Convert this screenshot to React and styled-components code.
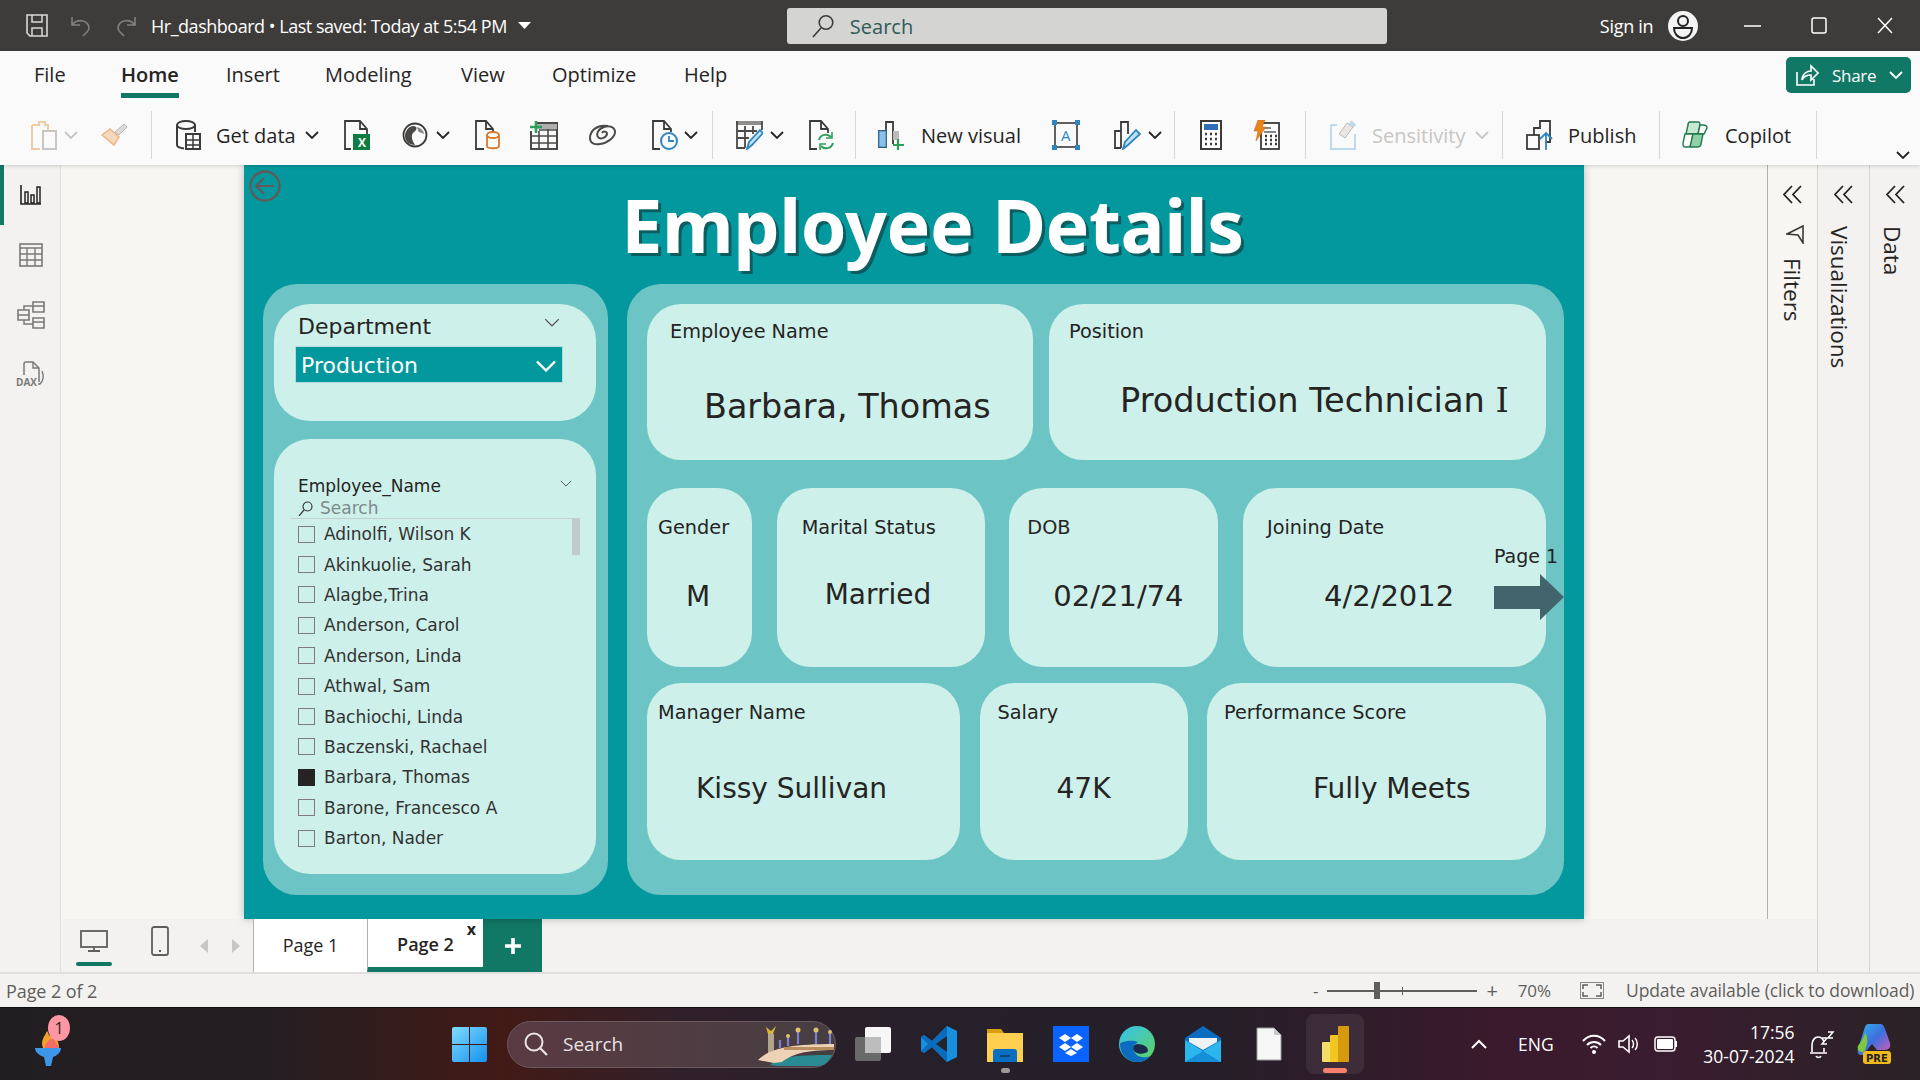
import React from "react";
import styled, { createGlobalStyle } from "styled-components";

const Global = createGlobalStyle`
  html, body { margin: 0; padding: 0; width: 1920px; height: 1080px; overflow: hidden; }
  body { font-family: "Open Sans", "Noto Sans", sans-serif; background: #f3f2f1; }
  * { box-sizing: border-box; }
  svg { display: block; }
`;

const Page = styled.div`width:1920px;height:1080px;display:flex;flex-direction:column;`;

/* title bar */
const TitleBar = styled.header`height:51px;background:#3e3c3a;color:#fff;display:flex;align-items:center;position:relative;flex:none;`;
const TitleGroup = styled.div`display:flex;align-items:center;margin-left:${p=>p.$ml||0}px;`;
const FileName = styled.span`font-size:18px;letter-spacing:-.48px;white-space:nowrap;`;
const SearchBox = styled.div`width:600px;height:36px;background:#d4d4d2;border-radius:3px;display:flex;align-items:center;padding-left:25px;gap:16px;color:#2f5b57;font-size:20px;margin-left:${p=>p.$ml}px;padding-top:1px;`;
const SignIn = styled.span`font-size:18px;letter-spacing:-.3px;`;

/* ribbon */
const Ribbon = styled.section`height:114px;background:#fafafa;flex:none;position:relative;z-index:2;box-shadow:0 1px 4px rgba(0,0,0,.16);`;
const TabRow = styled.nav`height:54px;display:flex;align-items:flex-start;position:relative;`;
const RibbonTab = styled.div`
  margin-left:${p=>p.$ml}px;width:${p=>p.$w}px;height:47px;padding-top:10px;font-size:20px;line-height:27px;color:#252423;white-space:nowrap;
  font-weight:${p=>p.$on?600:400};
  border-bottom:${p=>p.$on?"5px solid #117865":"none"};
`;
const ShareBtn = styled.button`
  position:absolute;left:1786px;top:6px;width:125px;height:36px;background:#117865;border:0;border-radius:5px;color:#fff;
  font:400 17px "Open Sans",sans-serif;display:flex;align-items:center;padding:0 0 0 9px;gap:13px;letter-spacing:-.3px;
`;
const ToolRow = styled.div`height:60px;display:flex;align-items:center;`;
const Slot = styled.div`margin-left:${p=>p.$ml}px;width:${p=>p.$w}px;flex:none;display:flex;align-items:center;justify-content:center;margin-top:${p=>p.$mt||0}px;`;
const ToolText = styled.span`
  margin-left:${p=>p.$ml}px;width:${p=>p.$w}px;flex:none;font-size:20px;white-space:nowrap;color:${p=>p.$off?"#c8c6c4":"#252423"};
`;
const VDiv = styled.div`margin-left:${p=>p.$ml}px;width:1px;height:48px;background:#d8d6d4;flex:none;`;

/* work area */
const Work = styled.main`flex:1;display:flex;min-height:0;`;
const Rail = styled.aside`width:61px;background:#f3f2f1;border-right:1px solid #e1dfdd;flex:none;display:flex;flex-direction:column;position:relative;`;
const RailItem = styled.div`height:60px;display:flex;align-items:center;justify-content:center;border-left:4px solid ${p=>p.$on?"#117865":"transparent"};padding-right:3px;`;
const Center = styled.div`width:1756px;display:flex;flex-direction:column;flex:none;`;
const CanvasRow = styled.div`height:754px;display:flex;flex:none;background:#f7f6f2;`;
const CanvasWell = styled.div`flex:1;padding-left:183px;`;
const FilterPane = styled.div`width:50px;border-left:1px solid #b3b1af;flex:none;`;
const SidePane = styled.div`width:${p=>p.$w}px;flex:none;background:${p=>p.$bg};border-left:1px solid #d8d6d4;`;
const PaneInner = styled.div`display:flex;flex-direction:column;align-items:center;padding-top:20px;`;
const VText = styled.span`writing-mode:vertical-rl;font-size:22.5px;color:#252423;margin-top:${p=>p.$mt}px;margin-right:${p=>p.$mr||0}px;font-weight:400;line-height:24px;`;

const Canvas = styled.div`width:1340px;height:754px;background:#03989e;position:relative;box-shadow:0 0 8px rgba(0,0,0,.25);`;
const BackBtn = styled.div`position:absolute;left:5px;top:5px;`;
const Title = styled.h1`
  margin:0;height:119px;padding:12px 0 0 37px;text-align:center;color:#fff;font:700 73.5px/96px "Noto Sans",sans-serif;
  text-shadow:3px 3px 0 #0b5d60;letter-spacing:-.4px;
`;
const Panels = styled.div`display:flex;gap:19px;padding-left:19px;`;
const OuterLeft = styled.div`width:345px;height:611px;background:#6cc4c4;border-radius:34px;padding:20px 0 0 11px;`;
const OuterRight = styled.div`width:937px;height:611px;background:#6cc4c4;border-radius:34px;padding:20px 0 0 20px;position:relative;`;

const SoftCard = styled.div`background:#cdf0ea;width:${p=>p.$w}px;height:${p=>p.$h}px;border-radius:36px;padding-top:${p=>p.$pt||0}px;margin-bottom:${p=>p.$mb||0}px;`;
const DeptHead = styled.div`display:flex;justify-content:space-between;align-items:flex-start;padding:0 36px 0 24px;height:30px;margin-bottom:4px;`;
const SlicerTitle = styled.div`font:400 ${p=>p.$fs}px/${p=>p.$lh}px "DejaVu Sans",sans-serif;color:#252423;`;
const HeadChevron = styled.div`padding-top:${p=>p.$pt}px;`;
const Dropdown = styled.div`margin-left:21px;width:268px;height:37px;background:#03989e;border:1px solid #b2dcdc;color:#fff;font:400 22px/30px "DejaVu Sans",sans-serif;padding:3px 5px 0 5px;display:flex;align-items:center;justify-content:space-between;`;
const EmpHead = styled.div`display:flex;justify-content:space-between;align-items:flex-start;padding:36px 24px 0 24px;height:60px;`;
const SearchLine = styled.div`display:flex;align-items:center;gap:7px;padding-left:24px;height:19px;color:#7d8b89;font:400 17px/19px "DejaVu Sans",sans-serif;`;
const ListArea = styled.div`margin:0 16px;border-top:1px solid #c3cfcc;position:relative;padding:0 0 0 8px;height:350px;`;
const ScrollThumb = styled.div`position:absolute;right:0;top:0;width:8px;height:36px;background:#c0cccb;`;
const ListRow = styled.div`height:30.4px;display:flex;align-items:center;gap:9px;font:400 17px/22px "DejaVu Sans",sans-serif;color:#333;`;
const Check = styled.span`width:17px;height:17px;flex:none;border:1px solid ${p=>p.$on?"#252423":"#7e7b7b"};background:${p=>p.$on?"#252423":"transparent"};`;

const CardRow = styled.div`display:grid;grid-template-columns:${p=>p.$cols};column-gap:${p=>p.$gap}px;height:${p=>p.$h}px;margin-bottom:${p=>p.$mb||0}px;`;
const InfoCard = styled.article`background:#cdf0ea;border-radius:34px;padding-top:${p=>p.$pt}px;padding-left:${p=>p.$pl}px;`;
const InfoLabel = styled.div`font:400 19.3px/24px "DejaVu Sans",sans-serif;color:#252423;white-space:nowrap;`;
const InfoValue = styled.div`
  font:400 ${p=>p.$fs||28}px/${p=>p.$lh||40}px "DejaVu Sans",sans-serif;color:#252423;white-space:nowrap;
  margin-top:${p=>p.$mt}px;margin-left:${p=>p.$ml}px;
`;
const SerifI = styled.span`font-family:"DejaVu Serif",serif;`;
const NextLink = styled.div`position:absolute;left:867px;top:260px;color:#252423;font:400 19px/24px "DejaVu Sans",sans-serif;`;
const NextArrow = styled.div`margin-top:6px;`;

/* tabs bar */
const TabBar = styled.div`height:54px;background:#f3f2f1;display:flex;align-items:stretch;flex:none;`;
const DeviceBtn = styled.div`margin-left:${p=>p.$ml}px;width:${p=>p.$w}px;display:flex;flex-direction:column;align-items:center;padding-top:${p=>p.$pt}px;position:relative;flex:none;`;
const DeviceMark = styled.span`position:absolute;bottom:7px;left:0;right:0;height:4px;border-radius:2px;background:#117865;`;
const PageTab = styled.div`
  width:${p=>p.$w}px;flex:none;background:#fff;border-left:1px solid #b3b1af;font-size:18px;color:#252423;display:flex;align-items:center;justify-content:center;position:relative;
  font-weight:${p=>p.$on?600:400};padding-bottom:2px;
  border-bottom:${p=>p.$on?"6px solid #117865":"none"};padding-top:${p=>p.$on?4:0}px;
`;
const TabClose = styled.span`position:absolute;right:7px;top:1px;font-size:16px;font-weight:700;line-height:18px;`;
const AddTab = styled.div`width:59px;flex:none;background:#117865;color:#fff;display:flex;align-items:center;justify-content:center;`;

/* status */
const StatusBar = styled.footer`height:35px;background:#f3f2f1;border-top:2px solid #e1dfdd;display:flex;align-items:center;color:#605e5c;font-size:18px;flex:none;padding-left:6px;position:relative;letter-spacing:-.1px;`;
const StatusText = styled.span`white-space:nowrap;`;
const ZoomWrap = styled.div`position:absolute;left:1313px;top:0;height:33px;display:flex;align-items:center;font-size:17px;`;
const ZoomTrack = styled.div`width:150px;height:2px;background:#605e5c;position:relative;margin:0 9px;`;
const ZoomThumb = styled.span`position:absolute;left:47px;top:-8px;width:6px;height:17px;background:#605e5c;`;
const ZoomTick = styled.span`position:absolute;left:75px;top:-3px;width:1px;height:8px;background:#605e5c;`;
const ZoomPlus = styled.span`font-size:20px;`;
const ZoomPct = styled.span`margin-left:20px;`;
const ZoomFit = styled.span`margin-left:29px;`;
const StatusUpdate = styled.span`position:absolute;left:1626px;top:4px;font-size:17.5px;letter-spacing:-.12px;white-space:nowrap;`;

/* taskbar */
const Taskbar = styled.div`
  height:73px;flex:none;border-top:1px solid #111;color:#fff;display:flex;align-items:center;position:relative;
  background:linear-gradient(90deg,#211e22 0%,#241e22 14%,#421a16 26%,#30202a 36%,#25202a 50%,#241f28 62%,#3a1a2c 78%,#3a1c30 86%,#2a2226 100%);
`;
const TaskIcon = styled.div`margin-left:${p=>p.$ml}px;flex:none;position:relative;display:flex;align-items:center;justify-content:center;`;
const Badge = styled.span`position:absolute;left:13px;top:-7px;width:22px;height:26px;border-radius:50%;background:#ff97a3;color:#222;font-size:16px;line-height:26px;text-align:center;`;
const TaskSearch = styled.div`margin-left:20px;width:329px;height:47px;border-radius:24px;background:linear-gradient(90deg,#5a3a42,#463e42);border:1px solid #6a5a5e;display:flex;align-items:center;padding-left:16px;gap:15px;font-size:19px;color:#e8e4e4;position:relative;flex:none;`;
const BridgeArt = styled.div`position:absolute;right:-1px;top:2px;`;
const ActiveApp = styled.div`margin-left:24px;width:58px;height:60px;border-radius:8px;background:rgba(255,255,255,.07);display:flex;flex-direction:column;align-items:center;padding-top:12px;position:relative;flex:none;`;
const ActivePip = styled.span`position:absolute;bottom:1px;left:17px;width:24px;height:5px;border-radius:3px;background:#f9806c;`;
const OpenDot = styled.span`position:absolute;bottom:-11px;left:50%;margin-left:-4px;width:9px;height:5px;border-radius:3px;background:#9a9a9a;`;
const TrayText = styled.span`margin-left:${p=>p.$ml}px;font-size:17.5px;flex:none;`;
const Clock = styled.div`margin-left:${p=>p.$ml}px;width:100px;flex:none;text-align:right;font-size:17.5px;line-height:24px;`;
const FilterGlyph = styled.div`margin-top:21px;margin-left:4px;`;

/* helpers */
const S = ({w,h,vb,children})=> <svg width={w} height={h} viewBox={vb||`0 0 ${w} ${h}`} fill="none">{children}</svg>;
const Chev = ({c="#252423",w=14,h=8,sw=1.8})=> <S w={w} h={h} vb="0 0 14 8"><path d="M1 1l6 6 6-6" stroke={c} strokeWidth={sw}/></S>;

const IconClipboard=()=> <S w={26} h={30}><path d="M1 5h7V2h6v3h3v6M1 5v24h8" stroke="#eecba6" strokeWidth="2"/><rect x="12" y="11" width="13" height="18" stroke="#c8c6c4" strokeWidth="2"/></S>;
const IconBrush=()=> <S w={28} h={24}><path d="M2 12l12 10 5-8-9-8z" fill="#f6d8ba" stroke="#e8b78c" strokeWidth="1.5"/><path d="M15 9l9-8 3 3-8 8z" fill="#dcdad8" stroke="#b8b6b4"/></S>;
const IconCyl=()=> <S w={26} h={30}><ellipse cx="11" cy="5" rx="9" ry="4" stroke="#3b3a39" strokeWidth="2"/><path d="M2 5v20c0 2 3 3 7 3.5M20 5v7" stroke="#3b3a39" strokeWidth="2"/><rect x="11" y="14" width="14" height="15" fill="#fafafa" stroke="#3b3a39" strokeWidth="2"/><path d="M11 20h14M11 25h14M18 14v15" stroke="#3b3a39" strokeWidth="1.5"/></S>;
const IconExcel=()=> <S w={27} h={30}><path d="M8 29H2V1h15l7 8v5M17 1v8h7" stroke="#3b3a39" strokeWidth="1.8"/><rect x="10" y="14" width="17" height="16" fill="#107c41"/><text x="15" y="27" fill="#fff" fontSize="12" fontWeight="700" fontFamily="Open Sans">X</text></S>;
const IconLake=()=> <S w={26} h={26}><circle cx="13" cy="13" r="11.5" stroke="#3b3a39" strokeWidth="1.8"/><path d="M3 14c0-6 5-10 8-10 5 0 4 4 1 6-3 2-3 7 1 13-6 0-10-4-10-9z" fill="#4a4947"/><path d="M15 5c4 1 7 4 7 7-3-2-5-1-6-3z" fill="#8a8886"/></S>;
const IconSql=()=> <S w={26} h={30}><path d="M10 29H2V1h10l7 8v3M12 1v8h7" stroke="#3b3a39" strokeWidth="1.8"/><ellipse cx="19" cy="15" rx="6" ry="3" fill="#fff" stroke="#d9772b" strokeWidth="1.8"/><path d="M13 15v11c0 3 12 3 12 0V15" stroke="#d9772b" strokeWidth="1.8"/></S>;
const IconTablePlus=()=> <S w={29} h={29}><path d="M8 2h20v26H2V10" stroke="#4a4947" strokeWidth="2"/><path d="M8 3h20v5H8z" fill="#b0aeac"/><path d="M2 15h26M2 22h26M10 10v18M19 8v20M10 9h18" stroke="#4a4947" strokeWidth="1.6"/><path d="M7 0v12M1 6h12" stroke="#2f9e5b" strokeWidth="2.6"/></S>;
const IconSwirl=()=> <S w={29} h={22}><path d="M20 2C9 0 2 7 2 14c0 6 6 7 10 6 8-1 15-7 15-12 0-5-6-7-11-5C10 5 8 10 10 13c2 3 8 1 9-3 0-3-4-3-5-1" stroke="#4a4947" strokeWidth="2"/></S>;
const IconRecent=()=> <S w={28} h={30}><path d="M9 29H2V1h11l7 8v3M13 1v8h7" stroke="#3b3a39" strokeWidth="1.8"/><circle cx="18" cy="21" r="8" fill="#fafafa" stroke="#2e86c1" strokeWidth="2"/><path d="M18 16v5h5" stroke="#2e86c1" strokeWidth="1.8"/></S>;
const IconTransform=()=> <S w={28} h={30}><path d="M1 1h26v4H1z" fill="#8f8d8b"/><path d="M2 1v27h8M27 1v9M2 11h20M2 18h12M10 6v22M18 6v8" stroke="#4a4947" strokeWidth="1.8"/><path d="M12 29l2-7 11-12 3 3-11 12z" fill="#bfe0f5" stroke="#2e86c1" strokeWidth="1.8"/></S>;
const IconRefresh=()=> <S w={28} h={30}><path d="M9 29H2V1h11l7 8v4M13 1v8h7" stroke="#3b3a39" strokeWidth="1.8"/><path d="M11 20a7 7 0 0 1 12-3M25 23a7 7 0 0 1-12 3" stroke="#2f9e5b" strokeWidth="2"/><path d="M24 12v6h-6M12 30v-6h6" stroke="#2f9e5b" strokeWidth="1.6"/></S>;
const IconNewVis=()=> <S w={27} h={30}><path d="M8 27H1V11h7zM8 27V2h7v22" stroke="#3b3a39" strokeWidth="1.8"/><rect x="1" y="11" width="7" height="16" fill="#8cc0e8" stroke="#2e86c1"/><rect x="15" y="11" width="6" height="9" fill="#bdbbb9"/><path d="M20 19v11M15 25h11" stroke="#2f9e5b" strokeWidth="2.2"/></S>;
const IconTextbox=()=> <S w={28} h={30}><rect x="3" y="3" width="22" height="24" stroke="#3b3a39" strokeWidth="1.6"/><path d="M0 0h5v5H0zM23 0h5v5h-5zM0 25h5v5H0zM23 25h5v5h-5z" fill="#2e86c1"/><text x="9" y="21" fontSize="15" fill="#2e86c1" fontFamily="Open Sans">A</text></S>;
const IconMore=()=> <S w={27} h={30}><path d="M7 28H1V11h6V2h7v12M7 11v17" stroke="#3b3a39" strokeWidth="1.8"/><path d="M9 29l2-7 11-12 4 4-12 11z" fill="#bfe0f5" stroke="#2e86c1" strokeWidth="1.8"/></S>;
const IconCalc=({bolt})=> <S w={bolt?27:22} h={30}>{bolt?<><rect x="8" y="3" width="18" height="26" fill="#fff" stroke="#3b3a39" strokeWidth="1.8"/><path d="M11 8h7M11 12h12" stroke="#8a8886" strokeWidth="2"/><path d="M12 16h2M17 16h2M22 16h2M12 20h2M17 20h2M22 20h2M12 24h2M17 24h2M22 24h2" stroke="#3b3a39" strokeWidth="2.4"/><path d="M5 0h7l-3 7h4L3 21l2-10H1z" fill="#e8861b" stroke="#c85c10" strokeWidth=".5"/></>:<><rect x="1" y="1" width="20" height="28" fill="#fff" stroke="#3b3a39" strokeWidth="2"/><rect x="4" y="4" width="14" height="6" fill="#2e6fb7"/><path d="M5 14h2M10 14h2M15 14h2M5 19h2M10 19h2M15 19h2M5 24h2M10 24h2M15 24h2" stroke="#3b3a39" strokeWidth="2.6"/></>}</S>;
const IconSens=()=> <S w={27} h={30}><path d="M1 5v24h24V14M1 5h6" stroke="#bcd9ee" strokeWidth="2"/><path d="M9 14l8-11 6 4-8 11z" fill="#e8e7e5" stroke="#bcbab8"/><path d="M20 2l5 4" stroke="#bcd9ee" strokeWidth="4"/></S>;
const IconPublish=()=> <S w={27} h={30}><rect x="1" y="15" width="12" height="14" stroke="#3b3a39" strokeWidth="1.8"/><path d="M8 15V8h6V1h10v21h-4" stroke="#3b3a39" strokeWidth="1.8"/><path d="M20 30V14m-6 5l6-6 6 6" stroke="#2e86c1" strokeWidth="1.8"/></S>;
const IconCopilot=()=> <S w={26} h={28}><path d="M8 1h8c2 0 2 1 2 3l-2 9H4L6 4c0-2 1-3 2-3z" fill="#c9e8d4" stroke="#1f7a4c" strokeWidth="1.4"/><path d="M13 13h9l3-6c0-2-2-3-4-3h-3l-2 9z" fill="#fafafa" stroke="#1f7a4c" strokeWidth="1.4"/><path d="M3 13h8l-2 11c0 1-2 2-3 2H3c-2 0-2-2-2-4z" fill="#fafafa" stroke="#1f7a4c" strokeWidth="1.4"/><path d="M11 13h10l-2 10c0 2-2 3-4 3H8z" fill="#8fd0a6" stroke="#1f7a4c" strokeWidth="1.4"/></S>;

const RailReport=()=> <S w={22} h={22}><path d="M1 1v19h20" stroke="#252423" strokeWidth="1.6"/><path d="M5 8h3v11H5zM11 11h3v8h-3zM17 3h3v16h-3z" stroke="#252423" strokeWidth="1.5"/></S>;
const RailTable=()=> <S w={24} h={24}><rect x="1" y="1" width="22" height="22" stroke="#7b7977" strokeWidth="1.6"/><path d="M1 5h22M1 11h22M1 17h22M8 5v18M16 5v18" stroke="#7b7977" strokeWidth="1.4"/></S>;
const RailModel=()=> <S w={28} h={28}><path d="M1 9h11v10H1zM1 14h11M16 1h11v10H16zM16 5h11M16 17h11v10H16zM16 21h11" stroke="#7b7977" strokeWidth="1.6"/><path d="M7 9V5h9M7 19v4h9" stroke="#7b7977" strokeWidth="1.5"/></S>;
const RailDax=()=> <S w={30} h={28}><path d="M8 14V3c0-1 1-2 2-2h7l6 6v14" stroke="#7b7977" strokeWidth="1.5"/><path d="M17 1v6h6M26 10c2 5 1 10-2 13l-2 0" stroke="#7b7977" strokeWidth="1.4"/><text x="0" y="25" fontSize="10" fontWeight="700" fill="#7b7977" fontFamily="Open Sans">DAX</text></S>;
const DoubleChev=()=> <S w={19} h={19}><path d="M9 1L1 9.500l8 8.500M18 1l-8 8.500 8 8.500" stroke="#252423" strokeWidth="1.8"/></S>;

const people=["Adinolfi, Wilson K","Akinkuolie, Sarah","Alagbe,Trina","Anderson, Carol","Anderson, Linda","Athwal, Sam","Bachiochi, Linda","Baczenski, Rachael","Barbara, Thomas","Barone, Francesco A","Barton, Nader"];

export default function App(){
  return (
    <Page>
      <Global/>
      <TitleBar>
        <TitleGroup $ml={26}><S w={22} h={23}><path d="M1 1h20v21H4l-3-3z" stroke="#d8d8d8" strokeWidth="1.6"/><path d="M6 1v7h10V1M6 22v-8h10v8" stroke="#d8d8d8" strokeWidth="1.5"/></S></TitleGroup>
        <TitleGroup $ml={22}><S w={22} h={22}><path d="M2 2v8h8M2 10c3-4 7-5 11-4 5 1 8 7 4 11l-4 4" stroke="#80807e" strokeWidth="1.6"/></S></TitleGroup>
        <TitleGroup $ml={23}><S w={22} h={22}><path d="M20 2v8h-8M20 10c-3-4-7-5-11-4-5 1-8 7-4 11l4 4" stroke="#80807e" strokeWidth="1.6"/></S></TitleGroup>
        <TitleGroup $ml={14}><FileName>Hr_dashboard  •  Last saved: Today at 5:54 PM</FileName></TitleGroup>
        <TitleGroup $ml={11}><S w={13} h={7}><path d="M0 0h13L6.500 7z" fill="#fff"/></S></TitleGroup>
        <SearchBox $ml={256}>
          <S w={22} h={24}><circle cx="14" cy="8.500" r="6.800" stroke="#3b3a39" strokeWidth="1.6"/><path d="M9 14L1 23" stroke="#3b3a39" strokeWidth="1.6"/></S>
          Search
        </SearchBox>
        <TitleGroup $ml={213}><SignIn>Sign in</SignIn></TitleGroup>
        <TitleGroup $ml={15}><S w={30} h={30}><circle cx="15" cy="15" r="15" fill="#f4f4f4"/><circle cx="15" cy="10" r="5" stroke="#222" strokeWidth="2"/><path d="M6 17h18c0 6-4 10-9 10s-9-4-9-10z" stroke="#222" strokeWidth="2"/></S></TitleGroup>
        <TitleGroup $ml={46}><S w={17} h={2}><path d="M0 1h17" stroke="#fff" strokeWidth="1.5"/></S></TitleGroup>
        <TitleGroup $ml={50}><S w={16} h={17}><rect x="1" y="1" width="14" height="15" rx="2" stroke="#fff" strokeWidth="1.5"/></S></TitleGroup>
        <TitleGroup $ml={50}><S w={16} h={17}><path d="M1 1l14 15M15 1L1 16" stroke="#fff" strokeWidth="1.5"/></S></TitleGroup>
      </TitleBar>

      <Ribbon>
        <TabRow>
          <RibbonTab $ml={34} $w={30}>File</RibbonTab>
          <RibbonTab $ml={57} $w={58} $on>Home</RibbonTab>
          <RibbonTab $ml={47} $w={51}>Insert</RibbonTab>
          <RibbonTab $ml={48} $w={88}>Modeling</RibbonTab>
          <RibbonTab $ml={48} $w={44}>View</RibbonTab>
          <RibbonTab $ml={47} $w={84}>Optimize</RibbonTab>
          <RibbonTab $ml={48} $w={43}>Help</RibbonTab>
          <ShareBtn>
            <S w={24} h={24}><path d="M2 9v13h17v-6" stroke="#fff" strokeWidth="1.6"/><path d="M7 17c0-6 5-9 9-9V3l7 7-7 7v-5c-4 0-7 1-9 5z" stroke="#fff" strokeWidth="1.6"/></S>
            Share
            <Chev c="#fff"/>
          </ShareBtn>
        </TabRow>
        <ToolRow>
          <Slot $ml={31} $w={26}><IconClipboard/></Slot>
          <Slot $ml={7} $w={14}><Chev c="#c8c6c4"/></Slot>
          <Slot $ml={22} $w={28}><IconBrush/></Slot>
          <VDiv $ml={23}/>
          <Slot $ml={23} $w={26}><IconCyl/></Slot>
          <ToolText $ml={15} $w={80}>Get data</ToolText>
          <Slot $ml={9} $w={14}><Chev/></Slot>
          <Slot $ml={24} $w={27}><IconExcel/></Slot>
          <Slot $ml={32} $w={26}><IconLake/></Slot>
          <Slot $ml={8} $w={14}><Chev/></Slot>
          <Slot $ml={24} $w={26}><IconSql/></Slot>
          <Slot $ml={29} $w={29}><IconTablePlus/></Slot>
          <Slot $ml={30} $w={29}><IconSwirl/></Slot>
          <Slot $ml={34} $w={28}><IconRecent/></Slot>
          <Slot $ml={5} $w={14}><Chev/></Slot>
          <VDiv $ml={14}/>
          <Slot $ml={22} $w={28}><IconTransform/></Slot>
          <Slot $ml={7} $w={14}><Chev/></Slot>
          <Slot $ml={24} $w={28}><IconRefresh/></Slot>
          <VDiv $ml={19}/>
          <Slot $ml={22} $w={27}><IconNewVis/></Slot>
          <ToolText $ml={16} $w={100}>New visual</ToolText>
          <Slot $ml={31} $w={28}><IconTextbox/></Slot>
          <Slot $ml={34} $w={27}><IconMore/></Slot>
          <Slot $ml={7} $w={14}><Chev/></Slot>
          <VDiv $ml={12}/>
          <Slot $ml={25} $w={22}><IconCalc/></Slot>
          <Slot $ml={31} $w={27}><IconCalc bolt/></Slot>
          <VDiv $ml={25}/>
          <Slot $ml={24} $w={27}><IconSens/></Slot>
          <ToolText $ml={15} $w={93} $off>Sensitivity</ToolText>
          <Slot $ml={10} $w={14}><Chev c="#c8c6c4"/></Slot>
          <VDiv $ml={13}/>
          <Slot $ml={23} $w={27}><IconPublish/></Slot>
          <ToolText $ml={15} $w={67}>Publish</ToolText>
          <VDiv $ml={24}/>
          <Slot $ml={22} $w={26}><IconCopilot/></Slot>
          <ToolText $ml={17} $w={68}>Copilot</ToolText>
          <VDiv $ml={23}/>
          <Slot $ml={79} $w={14} $mt={40}><Chev/></Slot>
        </ToolRow>
      </Ribbon>

      <Work>
        <Rail>
          <RailItem $on><RailReport/></RailItem>
          <RailItem><RailTable/></RailItem>
          <RailItem><RailModel/></RailItem>
          <RailItem><RailDax/></RailItem>
        </Rail>
        <Center>
          <CanvasRow>
            <CanvasWell>
              <Canvas>
                <BackBtn><S w={32} h={32}><circle cx="16" cy="16" r="14.500" stroke="#625a5a" strokeWidth="2.4"/><path d="M25 16H7m8-8l-8 8 8 8" stroke="#625a5a" strokeWidth="2.2"/></S></BackBtn>
                <Title>Employee Details</Title>
                <Panels>
                  <OuterLeft>
                    <SoftCard $w={322} $h={117} $pt={8} $mb={18}>
                      <DeptHead>
                        <SlicerTitle $fs={22} $lh={30}>Department</SlicerTitle>
                        <HeadChevron $pt={6}><Chev c="#54514f" w={16} h={9} sw={1.2}/></HeadChevron>
                      </DeptHead>
                      <Dropdown>Production<Chev c="#fff" w={22} h={12} sw={1.6}/></Dropdown>
                    </SoftCard>
                    <SoftCard $w={322} $h={435}>
                      <EmpHead>
                        <SlicerTitle $fs={17} $lh={22}>Employee_Name</SlicerTitle>
                        <HeadChevron $pt={5}><Chev c="#54514f" w={12} h={7} sw={1.1}/></HeadChevron>
                      </EmpHead>
                      <SearchLine>
                        <S w={15} h={15}><circle cx="9.500" cy="5.500" r="4.500" stroke="#3b3a39" strokeWidth="1.200"/><path d="M6 9l-5 6" stroke="#3b3a39" strokeWidth="1.200"/></S>
                        Search
                      </SearchLine>
                      <ListArea>
                        <ScrollThumb/>
                        {people.map((n,i)=>(
                          <ListRow key={n}><Check $on={i===8}/>{n}</ListRow>
                        ))}
                      </ListArea>
                    </SoftCard>
                  </OuterLeft>
                  <OuterRight>
                    <CardRow $cols="386px 497px" $gap={16} $h={156} $mb={28}>
                      <InfoCard $pt={16} $pl={23}>
                        <InfoLabel>Employee Name</InfoLabel>
                        <InfoValue $fs={33.400} $lh={44} $mt={41} $ml={34}>Barbara, Thomas</InfoValue>
                      </InfoCard>
                      <InfoCard $pt={16} $pl={20}>
                        <InfoLabel>Position</InfoLabel>
                        <InfoValue $fs={33.600} $lh={44} $mt={35} $ml={51}>Production Technician <SerifI>I</SerifI></InfoValue>
                      </InfoCard>
                    </CardRow>
                    <CardRow $cols="105px 208px 209px 303px" $gap={24.67} $h={179} $mb={16}>
                      <InfoCard $pt={28} $pl={11}>
                        <InfoLabel>Gender</InfoLabel>
                        <InfoValue $mt={37} $ml={28}>M</InfoValue>
                      </InfoCard>
                      <InfoCard $pt={28} $pl={25}>
                        <InfoLabel>Marital Status</InfoLabel>
                        <InfoValue $mt={35} $ml={23}>Married</InfoValue>
                      </InfoCard>
                      <InfoCard $pt={28} $pl={18}>
                        <InfoLabel>DOB</InfoLabel>
                        <InfoValue $fs={29} $mt={36} $ml={26}>02/21/74</InfoValue>
                      </InfoCard>
                      <InfoCard $pt={28} $pl={24}>
                        <InfoLabel>Joining Date</InfoLabel>
                        <InfoValue $fs={29} $mt={36} $ml={57}>4/2/2012</InfoValue>
                      </InfoCard>
                    </CardRow>
                    <CardRow $cols="313px 208px 339px" $gap={19.5} $h={177}>
                      <InfoCard $pt={18} $pl={11}>
                        <InfoLabel>Manager Name</InfoLabel>
                        <InfoValue $mt={44} $ml={38}>Kissy Sullivan</InfoValue>
                      </InfoCard>
                      <InfoCard $pt={18} $pl={18}>
                        <InfoLabel>Salary</InfoLabel>
                        <InfoValue $mt={44} $ml={59}>47K</InfoValue>
                      </InfoCard>
                      <InfoCard $pt={18} $pl={17}>
                        <InfoLabel>Performance Score</InfoLabel>
                        <InfoValue $mt={44} $ml={89}>Fully Meets</InfoValue>
                      </InfoCard>
                    </CardRow>
                    <NextLink>
                      Page 1
                      <NextArrow>
                        <S w={70} h={46}><path d="M0 12h46V0l24 23-24 23V35H0z" fill="#42656d"/></S>
                      </NextArrow>
                    </NextLink>
                  </OuterRight>
                </Panels>
              </Canvas>
            </CanvasWell>
            <FilterPane>
              <PaneInner>
                <DoubleChev/>
                <FilterGlyph><S w={18} h={19}><path d="M17 1v17l-5-8L1 9z" stroke="#3b3a39" strokeWidth="1.6"/></S></FilterGlyph>
                <VText $mt={14} $mr={2}>Filters</VText>
              </PaneInner>
            </FilterPane>
          </CanvasRow>
          <TabBar>
            <DeviceBtn $ml={15} $w={36} $pt={11}>
              <S w={28} h={22}><rect x="1" y="1" width="26" height="16" stroke="#605e5c" strokeWidth="1.8"/><path d="M14 17v3M8 21h12" stroke="#605e5c" strokeWidth="1.8"/></S>
              <DeviceMark/>
            </DeviceBtn>
            <DeviceBtn $ml={39} $w={18} $pt={7}>
              <S w={18} h={30}><rect x="1" y="1" width="16" height="28" rx="2" stroke="#605e5c" strokeWidth="1.8"/><path d="M8 25h2" stroke="#605e5c" strokeWidth="1.8"/></S>
            </DeviceBtn>
            <DeviceBtn $ml={31} $w={8} $pt={20}><S w={8} h={14}><path d="M8 0v14L0 7z" fill="#c8c6c4"/></S></DeviceBtn>
            <DeviceBtn $ml={24} $w={8} $pt={20}><S w={8} h={14}><path d="M0 0v14l8-7z" fill="#c8c6c4"/></S></DeviceBtn>
            <DeviceBtn $ml={13} $w={0} $pt={0}/>
            <PageTab $w={114}>Page 1</PageTab>
            <PageTab $w={116} $on>Page 2<TabClose>x</TabClose></PageTab>
            <AddTab><S w={16} h={16}><path d="M8 0v16M0 8h16" stroke="#fff" strokeWidth="3.600"/></S></AddTab>
          </TabBar>
        </Center>
        <SidePane $w={52} $bg="#f3f2f1">
          <PaneInner>
            <DoubleChev/>
            <VText $mt={22} $mr={9}>Visualizations</VText>
          </PaneInner>
        </SidePane>
        <SidePane $w={51} $bg="#f3f2f1">
          <PaneInner>
            <DoubleChev/>
            <VText $mt={22} $mr={7}>Data</VText>
          </PaneInner>
        </SidePane>
      </Work>

      <StatusBar>
        <StatusText>Page 2 of 2</StatusText>
        <ZoomWrap>
          <span>-</span>
          <ZoomTrack><ZoomThumb/><ZoomTick/></ZoomTrack>
          <ZoomPlus>+</ZoomPlus>
          <ZoomPct>70%</ZoomPct>
          <ZoomFit><S w={24} h={17}><rect x=".5" y=".5" width="23" height="16" stroke="#8a8886"/><path d="M3 7V3h5M16 3h5v4M21 10v4h-5M8 14H3v-4" stroke="#605e5c" strokeWidth="1.500"/></S></ZoomFit>
        </ZoomWrap>
        <StatusUpdate>Update available (click to download)</StatusUpdate>
      </StatusBar>

      <Taskbar>
        <TaskIcon $ml={35}>
          <S w={26} h={44}>
            <path d="M8 26c-3-8 2-12 4-17 2 2 1 5 4 5 6 2 8 6 8 12z" fill="#f0a02c"/>
            <path d="M10 26c0-5 4-8 8-10l6 10z" fill="#f56a6a"/>
            <path d="M0 26h26c0 5-5 8-8 9l-2 9h-5l-2-9c-3-1-9-4-9-9z" fill="#3d96e8"/>
          </S>
          <Badge>1</Badge>
        </TaskIcon>
        <TaskIcon $ml={391}>
          <S w={35} h={35}>
            <defs><linearGradient id="win" x1="0" y1="0" x2="1" y2="1"><stop offset="0" stopColor="#7fdcff"/><stop offset="1" stopColor="#1490f0"/></linearGradient></defs>
            <path d="M0 2q0-2 2-2h15v17H0zM18 0h15q2 0 2 2v15H18zM0 18h17v17H2q-2 0-2-2zM18 18h17v15q0 2-2 2H18z" fill="url(#win)"/>
          </S>
        </TaskIcon>
        <TaskSearch>
          <S w={24} h={24}><circle cx="10" cy="10" r="8.500" stroke="#e8e4e4" strokeWidth="2"/><path d="M16 16l7 7" stroke="#e8e4e4" strokeWidth="2.200"/></S>
          Search
          <BridgeArt>
            <S w={78} h={42}>
              <rect x="10" y="10" width="6" height="22" fill="#b3a48c"/>
              <path d="M8 3l5 4 5-5-3 8h-5z" fill="#d9b43a"/>
              <path d="M22 24v-8M30 22v-10M40 20V6M58 20V6M72 22V8" stroke="#7d7fd0" strokeWidth="2.200"/>
              <circle cx="40" cy="6" r="2.500" fill="#e0c06a"/><circle cx="58" cy="6" r="2.500" fill="#e0c06a"/><circle cx="30" cy="12" r="2" fill="#e0c06a"/><circle cx="72" cy="8" r="2" fill="#e0c06a"/>
              <path d="M12 41c8-8 22-10 62-10-3 7-8 11-14 11H20z" fill="#2a8a94"/>
              <path d="M0 36c12-12 34-16 76-16v6c-28 0-42 4-52 12l-8 1z" fill="#eed2b5"/>
              <path d="M26 23h50v3H26z" fill="#b98d5e"/>
            </S>
          </BridgeArt>
        </TaskSearch>
        <TaskIcon $ml={19}>
          <S w={36} h={34}><rect x="0" y="10" width="26" height="24" rx="2" fill="#6a6a6a"/><rect x="10" y="0" width="26" height="26" rx="2" fill="#f6f6f6"/><rect x="10" y="10" width="16" height="16" fill="#bdbdbd"/></S>
        </TaskIcon>
        <TaskIcon $ml={30}>
          <S w={36} h={36}><path d="M26 0l10 5v26l-10 5L11 21 3 27l-3-2V11l3-2 8 6z" fill="#1a8fe0"/><path d="M26 0v36L11 21l-8 6-3-2 7-7-7-7 3-2 8 6z" fill="#0b6cbc"/><path d="M26 10L15 18l11 8z" fill="#23252a"/></S>
        </TaskIcon>
        <TaskIcon $ml={30}>
          <S w={36} h={36}><path d="M0 3h14l3 4h19v29H0z" fill="#d99e0a"/><path d="M0 7h36v29H0z" fill="#ffd04f"/><path d="M6 36V26q0-3 3-3h18q3 0 3 3v10z" fill="#0a6fc2"/><path d="M13 30h10" stroke="#08487e" strokeWidth="2"/></S>
          <OpenDot/>
        </TaskIcon>
        <TaskIcon $ml={30}>
          <S w={36} h={36}><rect width="36" height="36" fill="#0a63ff"/><path d="M12 8l6 4-6 4-6-4zM24 8l6 4-6 4-6-4zM12 17l6 4-6 4-6-4zM24 17l6 4-6 4-6-4zM18 23l6 4-6 3-6-3z" fill="#fff"/></S>
        </TaskIcon>
        <TaskIcon $ml={30}>
          <S w={36} h={36}>
            <defs><linearGradient id="edg" x1="0" y1="0" x2="1" y2="1"><stop offset="0" stopColor="#35c1f1"/><stop offset="1" stopColor="#5fd35a"/></linearGradient></defs>
            <circle cx="18" cy="18" r="18" fill="url(#edg)"/>
            <path d="M1 18C1 29 9 36 18 36c6 0 10-2 13-6-4 2-12 2-15-3-3-4-1-9 3-11-6-3-18 0-18 2z" fill="#0c6cc0"/>
            <path d="M19 16c7 0 11 3 11 7-2 3-9 4-13 1-3-3-2-7 2-8z" fill="#1b2a4a" transform="translate(-1 2)"/>
          </S>
        </TaskIcon>
        <TaskIcon $ml={30}>
          <S w={36} h={36}><path d="M0 12L18 0l18 12v24H0z" fill="#0a6cc0"/><path d="M4 12h28v4L18 24 4 16z" fill="#eef2f4"/><path d="M0 14l18 11 18-11v22H0z" fill="#2cb6ee"/><path d="M0 36l18-11 18 11z" fill="#1590d8"/></S>
        </TaskIcon>
        <TaskIcon $ml={35}>
          <S w={26} h={34}><path d="M1 1h17l7 7v25H1z" fill="#f7f7f7" stroke="#9a9a9a"/><path d="M18 1v7h7z" fill="#c8c8c8"/></S>
        </TaskIcon>
        <ActiveApp>
          <S w={27} h={36}><rect x="0" y="16" width="11" height="20" rx="1" fill="#f5dd6a"/><rect x="8" y="9" width="11" height="27" rx="1" fill="#f2c522"/><rect x="16" y="0" width="11" height="36" rx="1" fill="#d69a0c"/></S>
          <ActivePip/>
        </ActiveApp>
        <TaskIcon $ml={107}>
          <S w={16} h={10}><path d="M1 9l7-7 7 7" stroke="#fff" strokeWidth="2"/></S>
        </TaskIcon>
        <TrayText $ml={31}>ENG</TrayText>
        <TaskIcon $ml={28}>
          <S w={24} h={20}><path d="M1 7c6-7 16-7 22 0M5 11c4-4 10-4 14 0M8.500 14c2-2 5-2 7 0" stroke="#fff" strokeWidth="2"/><circle cx="12" cy="18" r="2" fill="#fff"/></S>
        </TaskIcon>
        <TaskIcon $ml={12}>
          <S w={22} h={20}><path d="M1 7h4l6-5v16l-6-5H1z" stroke="#fff" strokeWidth="1.600"/><path d="M14 6c2 2 2 6 0 8M17 4c3 3 3 9 0 12" stroke="#fff" strokeWidth="1.500"/></S>
        </TaskIcon>
        <TaskIcon $ml={14}>
          <S w={24} h={16}><rect x="1" y="1" width="20" height="14" rx="3" stroke="#fff" strokeWidth="1.500"/><rect x="3" y="3" width="16" height="10" rx="1" fill="#fff"/><path d="M22 5v6" stroke="#fff" strokeWidth="2"/></S>
        </TaskIcon>
        <Clock $ml={17}>17:56<br/>30-07-2024</Clock>
        <TaskIcon $ml={14}>
          <S w={28} h={32}><path d="M3 24V17c0-5 3-8 6-8s5 2 6 5M15 20v4M1 25h17M7 28c1 2 4 2 5 0" stroke="#fff" strokeWidth="1.600"/><path d="M13 10h5l-5 6h5M19 4h5l-5 6h5" stroke="#fff" strokeWidth="1.500"/></S>
        </TaskIcon>
        <TaskIcon $ml={20}>
          <S w={34} h={40}>
            <defs><linearGradient id="cop" x1="0" y1="0" x2="1" y2="1"><stop offset="0" stopColor="#35b4e8"/><stop offset=".5" stopColor="#3d6fe0"/><stop offset="1" stopColor="#e05ab0"/></linearGradient></defs>
            <path d="M11 0h12c3 0 4 2 5 5l5 14c1 4-1 7-5 7H20l-5-6-9 11H4c-3 0-4-3-3-6l6-19c1-4 2-6 4-6z" fill="url(#cop)"/>
            <path d="M1 22c2-3 6-8 7-13 3 3 3 10 0 17-2 4-9 2-7-4z" fill="#7ec83f"/>
            <rect x="6" y="27" width="28" height="13" rx="3" fill="#f2b91c"/>
            <text x="9" y="37.500" fontSize="10" fontWeight="800" fill="#222" fontFamily="DejaVu Sans">PRE</text>
          </S>
        </TaskIcon>
      </Taskbar>
    </Page>
  );
}
